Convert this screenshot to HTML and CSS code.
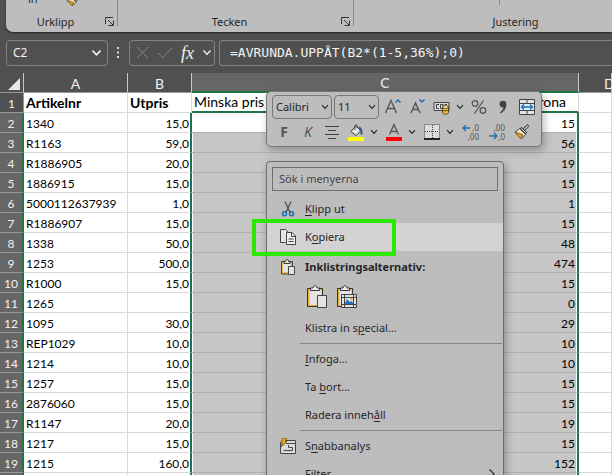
FILE: index.html
```html
<!doctype html>
<html lang="sv">
  <head>
    <meta charset="utf-8">
    <title>Kalkylblad</title>
    <meta name="viewport" content="width=device-width, initial-scale=1">
    <link rel="stylesheet" href="styles.css">
  </head>
  <body>
    <svg class="defs" aria-hidden="true">
      <symbol id="chevron" viewBox="0 0 8 6"><path d="M1 1.2 4 4.4 7 1.2" fill="none" stroke="currentColor" stroke-width="1.2"/></symbol>
      <symbol id="launcher" viewBox="0 0 9 9"><path d="M.5 7V.5H8M3 3l5 5M8.5 3.5v5h-5" fill="none" stroke="#333"/></symbol>
      <symbol id="brush" viewBox="0 0 16 16">
        <path d="M14.5 1.2 9.6 5.8" stroke="#444" stroke-width="3.2"/>
        <path d="M14.2 1.6 9.8 5.6" stroke="#ddd" stroke-width="1.2"/>
        <path d="m5.5 4.5 6.2 6L8 14.5 1 8.2z" fill="#f3e3bd" stroke="#444"/>
        <path d="m1 8.2 8 2.8-2.5 3.5z" fill="#e2a821" stroke="#7a5a18"/>
        <path d="m6.5 3.6 6 5.8" stroke="#444" stroke-width="2.6"/>
        <path d="m6.8 4 5.4 5.1" stroke="#ddd"/>
      </symbol>
    </svg>

    <div class="app">
      <header class="ribbon">
        <div class="group group-clipboard">
          <span class="clip-text">in</span>
          <svg class="clip-brush" width="14" height="14"><use href="#brush"/></svg>
          <span class="group-label">Urklipp</span>
          <button class="launcher" aria-label="Urklipp"><svg width="9" height="9"><use href="#launcher"/></svg></button>
        </div>
        <div class="group group-font">
          <span class="group-label">Tecken</span>
          <button class="launcher" aria-label="Tecken"><svg width="9" height="9"><use href="#launcher"/></svg></button>
        </div>
        <div class="group group-align">
          <span class="tick"></span>
          <span class="group-label">Justering</span>
        </div>
      </header>

      <div class="formula-bar">
        <div class="box name-box">
          <input type="text" value="C2" aria-label="Namnruta">
          <svg width="11" height="8"><use href="#chevron"/></svg>
        </div>
        <svg class="dots" width="3" height="12"><path d="M0 1h2M0 5.500h2M0 10h2" stroke="#ddd" stroke-width="2"/></svg>
        <div class="box fx-box">
          <button aria-label="Avbryt"><svg width="13" height="13"><path d="m1 1 11 11M12 1 1 12" stroke="#858585" fill="none"/></svg></button>
          <button aria-label="Ange"><svg width="16" height="12"><path d="m1 6 4.500 4.500L15 1" stroke="#858585" fill="none"/></svg></button>
          <button class="fx" aria-label="Infoga funktion">fx</button>
          <svg width="10" height="7"><use href="#chevron"/></svg>
        </div>
        <div class="box formula-box">
          <input type="text" value="=AVRUNDA.UPPÅT(B2*(1-5,36%);0)" aria-label="Formelfält">
        </div>
      </div>

      <table class="sheet">
        <colgroup><col class="col-head"><col class="col-a"><col class="col-b"><col class="col-c"><col></colgroup>
        <thead>
          <tr>
            <th class="corner"><svg width="12" height="12"><path d="M12 0v12H0z" fill="#e8e8e8"/></svg></th>
            <th>A</th><th>B</th><th class="selected">C</th><th class="col-d">D</th>
          </tr>
        </thead>
        <tbody>
          <tr class="titles"><th>1</th><td>Artikelnr</td><td>Utpris</td><td><div class="heading"><span>Minska pris</span><span>rona</span></div></td><td></td></tr>
          <tr class="active"><th>2</th><td>1340</td><td>15,0</td><td>15</td><td></td></tr>
          <tr><th>3</th><td>R1163</td><td>59,0</td><td>56</td><td></td></tr>
          <tr><th>4</th><td>R1886905</td><td>20,0</td><td>19</td><td></td></tr>
          <tr><th>5</th><td>1886915</td><td>15,0</td><td>15</td><td></td></tr>
          <tr><th>6</th><td>5000112637939</td><td>1,0</td><td>1</td><td></td></tr>
          <tr><th>7</th><td>R1886907</td><td>15,0</td><td>15</td><td></td></tr>
          <tr><th>8</th><td>1338</td><td>50,0</td><td>48</td><td></td></tr>
          <tr><th>9</th><td>1253</td><td>500,0</td><td>474</td><td></td></tr>
          <tr><th>10</th><td>R1000</td><td>15,0</td><td>15</td><td></td></tr>
          <tr><th>11</th><td>1265</td><td></td><td>0</td><td></td></tr>
          <tr><th>12</th><td>1095</td><td>30,0</td><td>29</td><td></td></tr>
          <tr><th>13</th><td>REP1029</td><td>10,0</td><td>10</td><td></td></tr>
          <tr><th>14</th><td>1214</td><td>10,0</td><td>10</td><td></td></tr>
          <tr><th>15</th><td>1257</td><td>15,0</td><td>15</td><td></td></tr>
          <tr><th>16</th><td>2876060</td><td>15,0</td><td>15</td><td></td></tr>
          <tr><th>17</th><td>R1147</td><td>20,0</td><td>19</td><td></td></tr>
          <tr><th>18</th><td>1217</td><td>15,0</td><td>15</td><td></td></tr>
          <tr><th>19</th><td>1215</td><td>160,0</td><td>152</td><td></td></tr>
          <tr><th></th><td></td><td></td><td></td><td></td></tr>
        </tbody>
      </table>

      <!-- floating format toolbar -->
      <div class="mini-toolbar">
        <div class="tool-row">
          <span class="pick pick-font"><select aria-label="Teckensnitt"><option>Calibri</option></select><svg width="8" height="6"><use href="#chevron"/></svg></span>
          <span class="pick pick-size"><select aria-label="Storlek"><option>11</option></select><svg width="8" height="6"><use href="#chevron"/></svg></span>
          <button class="tool" aria-label="Öka teckenstorlek"><svg width="18" height="18"><path d="M1.500 15 7 2.500 12.500 15M3.500 10.500h7" fill="none" stroke="#555" stroke-width="1.400"/><path d="m11.500 4.500 2.500-2.500 2.500 2.500" fill="none" stroke="#1a6fb5" stroke-width="1.500"/></svg></button>
          <button class="tool" aria-label="Minska teckenstorlek"><svg width="18" height="18"><path d="M3 15 7.500 5 12 15M4.500 11.500h6" fill="none" stroke="#555" stroke-width="1.400"/><path d="m11.500 1.500 2.500 2.500 2.500-2.500" fill="none" stroke="#1a6fb5" stroke-width="1.500"/></svg></button>
          <button class="tool tool-menu" aria-label="Valuta"><svg width="17" height="16"><path d="M1 3.500h15v8H1z" fill="#d8d8d8" stroke="#444"/><path d="M6 5.500H3.500v4H6M7.500 5.500h2.500v4H7.500zM14 5.500h-2.500" fill="none" stroke="#444"/><path d="M9.500 8v5.500c0 2.200 6 2.200 6 0V8" fill="#e9b93c" stroke="#5a471a"/><ellipse cx="12.500" cy="8" rx="3" ry="1.400" fill="#fff1bf" stroke="#5a471a"/><path d="M9.500 10.800c1 1.500 5 1.500 6 0" fill="none" stroke="#5a471a"/></svg><svg width="8" height="6"><use href="#chevron"/></svg></button>
          <button class="tool" aria-label="Procent"><svg width="16" height="16"><circle cx="4" cy="4.500" r="2.800" fill="none" stroke="#555" stroke-width="1.300"/><circle cx="12" cy="11.500" r="2.800" fill="none" stroke="#555" stroke-width="1.300"/><path d="M12.500 1.500 3.500 14.500" stroke="#555" stroke-width="1.300"/></svg></button>
          <button class="tool" aria-label="Tusentalsavgränsare"><svg width="10" height="16"><path d="M1.500 5.200a3.400 3.400 0 1 1 6.900 0c0 4.300-2 7.200-5.900 9.300l-.8-1.100c2.500-1.700 3.600-3.200 3.700-5-2.100.4-3.900-1-3.900-3.200z" fill="#444"/></svg></button>
          <button class="tool" aria-label="Slå ihop"><svg width="16" height="16"><path d="M.5.5h15v15H.5zM.5 4.500h15M.5 11.500h15M8 .5v4M8 11.500v4" fill="#e4e4e4" stroke="#444"/><path d="M1 5h14v6H1z" fill="#dcecf8"/><path d="M2.500 8h11M5 5.500 2.500 8 5 10.500M11 5.500 13.500 8 11 10.500" fill="none" stroke="#1a6fb5" stroke-width="1.300"/></svg></button>
        </div>
        <div class="tool-row">
          <button class="tool letter"><b>F</b></button>
          <button class="tool letter"><i>K</i></button>
          <button class="tool" aria-label="Centrera"><svg width="14" height="14"><path d="M0 1.500h14M3 5.500h8M0 9.500h14M3 13.500h8" stroke="#444"/></svg></button>
          <button class="tool tool-menu" aria-label="Fyllningsfärg"><svg width="16" height="18"><path d="m3 8.500 5-6 4.500 5.500-4.500 4.500z" fill="#e5e5e5" stroke="#444"/><path d="M7 7V2.500Q8 .5 9 2.500V5" fill="none" stroke="#444"/><path d="M10.500 4.500q3.500.5 3 7" fill="none" stroke="#245f91" stroke-width="2"/><path d="M0 14h16v4H0z" fill="#ff0"/></svg><svg width="8" height="6"><use href="#chevron"/></svg></button>
          <button class="tool tool-menu" aria-label="Teckenfärg"><svg width="16" height="18"><path d="M3.500 11.500 8 1.500l4.500 10M5 8.500h6" fill="none" stroke="#555" stroke-width="1.400"/><path d="M0 14h16v4H0z" fill="#f00"/></svg><svg width="8" height="6"><use href="#chevron"/></svg></button>
          <button class="tool tool-menu" aria-label="Kantlinjer"><svg width="16" height="16"><path d="M.5.5h15v14H.5z" fill="#dcdcdc" stroke="#444" stroke-dasharray="1 1"/><path d="M8.500 1v13M1 7.500h14" stroke="#444" stroke-dasharray="1 1"/><path d="M0 15h16" stroke="#222" stroke-width="2"/></svg><svg width="8" height="6"><use href="#chevron"/></svg></button>
          <button class="tool decimals" aria-label="Öka decimal"><svg width="18" height="18"><path d="M1 5h7M4 2 1 5l3 3" fill="none" stroke="#1a6fb5" stroke-width="1.300"/><text x="17" y="8">,0</text><text x="17" y="17">,00</text></svg></button>
          <button class="tool decimals" aria-label="Minska decimal"><svg width="18" height="18"><text x="17" y="8">,00</text><path d="M1 13h8M6 10l3 3-3 3" fill="none" stroke="#1a6fb5" stroke-width="1.300"/><text x="17" y="17">,0</text></svg></button>
          <button class="tool" aria-label="Hämta format"><svg width="16" height="16"><use href="#brush"/></svg></button>
        </div>
      </div>

      <!-- context menu -->
      <div class="context-menu">
        <input class="menu-search" type="text" placeholder="Sök i menyerna" aria-label="Sök i menyerna">
        <button class="item">
          <svg class="icon" width="16" height="16"><path d="M5 .5 9.800 11M11 .5 6.200 11" fill="none" stroke="#555" stroke-width="1.400"/><circle cx="4.500" cy="12.800" r="2" fill="none" stroke="#1a6fb5" stroke-width="1.500"/><circle cx="11.500" cy="12.800" r="2" fill="none" stroke="#1a6fb5" stroke-width="1.500"/></svg>
          <span><u>K</u>lipp ut</span>
        </button>
        <button class="item hover">
          <svg class="icon" width="16" height="16"><path d="M5.500 13.500h-5V.5h5l2.500 2.500" fill="#e4e4e4" stroke="#444"/><path d="M6.500 3.500h5.500l3.500 3.500v8.500h-9z" fill="#eee" stroke="#444"/><path d="M11.500 3.500v4h4M8.500 10h5M8.500 12.500h5" fill="none" stroke="#444"/></svg>
          <span>K<u>o</u>piera</span>
        </button>
        <div class="item item-title">
          <svg class="icon" width="16" height="17" viewBox="0 0 16 17"><path d="M2 3.500h9.500V14H2z" fill="#e4e4e4" stroke="#e9ad32" stroke-width="1.500"/><path d="M1.500 2.500h11v12.500h-11z" fill="none" stroke="#444"/><path d="M4 4.500V2.500h1.500c0-2.700 3-2.700 3 0H10v2z" fill="#eee" stroke="#333"/><path d="M8.500 7.500h6v8h-6z" fill="#e4e4e4" stroke="#444"/></svg>
          <span>Inklistringsalternativ:</span>
        </div>
        <div class="paste-row">
          <button aria-label="Klistra in"><svg width="20" height="23"><path d="M1.500 4h14v17h-14z" fill="#e4e4e4" stroke="#e9ad32" stroke-width="2"/><path d="M.5 3.500h15v18H.5z" fill="none" stroke="#333"/><path d="M3.500 5.500V3H6c0-3 4-3 4 0h2.500v2.500z" fill="#eee" stroke="#333"/><path d="M10.500 10.500h9v12h-9z" fill="#e4e4e4" stroke="#444"/></svg></button>
          <button aria-label="Klistra in bild"><svg width="20" height="23"><path d="M1.500 4h14v17h-14z" fill="#e4e4e4" stroke="#e9ad32" stroke-width="2"/><path d="M.5 3.500h15v18H.5z" fill="none" stroke="#333"/><path d="M3.500 5.500V3H6c0-3 4-3 4 0h2.500v2.500z" fill="#eee" stroke="#333"/><path d="M4.500 9.500h15v13h-15z" fill="#e4e4e4" stroke="#444"/><path d="M7.500 9.500v13M16.500 9.500v13M4.500 12.500h15M4.500 19.500h15" stroke="#444"/><path d="m8 18 2-4 3 3 1.500-1 1.500 2v1H8z" fill="#2574b8"/><path d="M13.500 13.500h2v1.500h-2z" fill="#d88a2a"/></svg></button>
        </div>
        <button class="item"><span>Klistra in s<u>p</u>ecial...</span></button>
        <hr>
        <button class="item"><span><u>I</u>nfoga...</span></button>
        <button class="item"><span>Ta <u>b</u>ort...</span></button>
        <button class="item"><span>Radera inneh<u>å</u>ll</span></button>
        <hr>
        <button class="item">
          <svg class="icon" width="16" height="16"><path d="M.5 5v10.500h15v-13H6" fill="#dcdcdc" stroke="#444"/><path d="M6 5.500h9M3.500 12.500h9v-3h-4V7" fill="none" stroke="#444"/><path d="M3 0h4L5 3.500h2L1 9l1.500-4H.5z" fill="#e9a824" stroke="#57410f" stroke-width=".7"/></svg>
          <span>S<u>n</u>abbanalys</span>
        </button>
        <button class="item"><span>Filt<u>e</u>r</span><svg class="more" width="6" height="10"><path d="m.5.5 4.500 4.500L.5 9.500" fill="none" stroke="#333" stroke-width="1.300"/></svg></button>
      </div>

      <div class="marker"></div>
    </div>
  </body>
</html>
```

FILE: styles.css
```css
* {
  box-sizing: border-box;
}
body {
  margin: 0;
  background: #505050;
  color: #262626;
  font: 11px/16px "Noto Sans", "Open Sans", sans-serif;
}
button,
input,
select {
  margin: 0;
  padding: 0;
  border: 0;
  background: none;
  color: inherit;
  font: inherit;
  appearance: none;
  outline: none;
}
svg {
  display: block;
  flex: none;
}
.defs {
  position: absolute;
  width: 0;
  height: 0;
}
.app {
  position: relative;
  height: 100vh;
  overflow: hidden;
}

/* ribbon */
.ribbon {
  display: flex;
  height: 32px;
  margin-left: 6px;
  overflow: hidden;
  background: #bdbdbd;
  border-bottom-left-radius: 7px;
  box-shadow: 0 1px 2px #222;
}
.group {
  position: relative;
  display: flex;
  flex: none;
  align-items: flex-end;
  justify-content: center;
  margin-bottom: 6px;
  border-right: 1px solid #888;
}
.group-clipboard {
  width: 112px;
  padding-right: 12px;
}
.group-font {
  width: 236px;
  padding-right: 12px;
}
.group-align {
  width: 324px;
}
.group-label {
  margin-bottom: -4px;
}
.launcher {
  position: absolute;
  right: 3px;
  bottom: 0;
}
.clip-text {
  position: absolute;
  left: 22px;
  top: -9px;
}
.clip-brush {
  position: absolute;
  left: 60px;
  top: -7px;
}
.tick {
  position: absolute;
  left: 145px;
  top: 0;
  width: 1px;
  height: 5px;
  background: #888;
}

/* formula bar */
.formula-bar {
  display: flex;
  align-items: center;
  height: 41px;
  padding-left: 6px;
  color: #f2f2f2;
}
.box {
  display: flex;
  align-items: center;
  height: 26px;
  border: 1px solid #858585;
  border-radius: 4px;
}
.name-box {
  width: 102px;
  padding: 0 5px 0 6px;
}
.name-box input {
  flex: 1;
  min-width: 0;
  font-size: 12px;
}
.dots {
  margin: 0 9px;
}
.fx-box {
  width: 86px;
  padding: 0 2px 0 6px;
  justify-content: space-between;
}
.fx {
  font: italic 18px/20px "Liberation Serif", serif;
}
.formula-box {
  flex: 1;
  margin-left: 4px;
  padding-left: 10px;
  border-right: 0;
  border-radius: 4px 0 0 4px;
}
.formula-box input {
  width: 100%;
  font: 13px/20px "DejaVu Sans Mono", monospace;
}

/* sheet */
.sheet {
  width: 100%;
  table-layout: fixed;
  border-collapse: separate;
  border-spacing: 0;
  background: #fff;
  color: #000;
  font: 12px/16px Lato, sans-serif;
}
.col-head {
  width: 24px;
}
.col-a {
  width: 104px;
}
.col-b {
  width: 64px;
}
.col-c {
  width: 387px;
}
.sheet th,
.sheet td {
  height: 20px;
  padding: 2px 2px 0;
  border-right: 1px solid #d9d9d9;
  border-bottom: 1px solid #d9d9d9;
  white-space: nowrap;
}
.sheet th {
  padding: 2px 0 0;
  background: #666;
  border-right: 2px solid #217346;
  border-bottom-color: #999;
  color: #f2f2f2;
  font-weight: normal;
}
.sheet thead th {
  background: #505050;
  border-right: 1px solid #c8c8c8;
  border-bottom: 1px solid #999;
  font-size: 14px;
}
.sheet thead .selected {
  background: #666;
  border-bottom: 2px solid #217346;
}
.sheet thead .col-d {
  padding-left: 25px;
  text-align: left;
}
.corner svg {
  margin-left: 8px;
}
.sheet .titles th {
  background: #505050;
  border-right: 1px solid #999;
}
.sheet .titles td {
  padding-top: 1px;
  font-size: 14px;
  font-weight: bold;
}
.sheet .titles td:nth-child(4) {
  padding-top: 0;
  border-bottom: 2px solid #217346;
  font-weight: normal;
}
.heading {
  display: flex;
  justify-content: space-between;
  padding-right: 10px;
}
tr:not(.titles) td:nth-child(3) {
  padding-right: 1px;
  border-right: 2px solid #217346;
  text-align: right;
}
tr:not(.titles) td:nth-child(4) {
  background: #c6c6c6;
  border-right: 2px solid #217346;
  border-bottom-color: #b0b0b0;
  box-shadow: inset 1px 0 #fff, inset -1px 0 #fff;
  text-align: right;
}
.sheet .active td:nth-child(4) {
  background: #fff;
}

/* mini toolbar */
.mini-toolbar {
  position: absolute;
  left: 266px;
  top: 91px;
  width: 276px;
  padding: 2px 2px 2px 5px;
  background: #bdbdbd;
  border: 1px solid #777;
  border-radius: 5px;
  box-shadow: 2px 3px 8px rgba(0, 0, 0, 0.3);
}
.tool-row {
  display: flex;
  align-items: center;
  height: 25px;
}
.pick {
  position: relative;
  flex: none;
  height: 24px;
  margin-right: 2px;
}
.pick select {
  width: 100%;
  height: 100%;
  padding-left: 3px;
  border: 1px solid #777;
  border-radius: 4px;
}
.pick svg {
  position: absolute;
  right: 3px;
  top: 9px;
  pointer-events: none;
}
.pick-font {
  width: 60px;
}
.pick-size {
  width: 45px;
}
.tool {
  display: flex;
  flex: none;
  align-items: center;
  justify-content: center;
  width: 24px;
  height: 24px;
}
.tool-menu {
  width: 38px;
  gap: 6px;
}
.letter {
  color: #555;
  font-size: 14px;
}
.decimals {
  width: 26px;
}
.decimals text {
  fill: #555;
  font-size: 8px;
  line-height: 8px;
  text-anchor: end;
}

/* context menu */
.context-menu {
  position: absolute;
  left: 266px;
  top: 161px;
  width: 238px;
  padding: 5px 0;
  background: #bdbdbd;
  border: 1px solid #6e6e6e;
  border-radius: 4px;
  box-shadow: 2px 3px 8px rgba(0, 0, 0, 0.3);
}
.menu-search {
  display: block;
  width: calc(100% - 10px);
  height: 24px;
  margin: 0 5px 4px;
  padding: 0 6px 2px;
  border: 1px solid #6e6e6e;
}
.menu-search::placeholder {
  color: #444;
}
.item {
  position: relative;
  display: flex;
  align-items: center;
  width: 100%;
  height: 28px;
  padding-left: 38px;
  text-align: left;
}
.item.hover {
  background: #d2d2d2;
}
.item-title {
  height: 32px;
  font-weight: bold;
}
.item u {
  text-underline-offset: 2px;
}
.icon {
  margin: 0 9px 0 -25px;
}
.more {
  margin: 0 8px 0 auto;
}
.paste-row {
  display: flex;
  gap: 10px;
  padding: 2px 0 6px 40px;
}
.context-menu hr {
  height: 1px;
  margin: 1px 1px 1px 33px;
  border: 0;
  background: #858585;
}

.marker {
  position: absolute;
  left: 252px;
  top: 219px;
  width: 144px;
  height: 37px;
  border: 4px solid #2be800;
  pointer-events: none;
}
```
